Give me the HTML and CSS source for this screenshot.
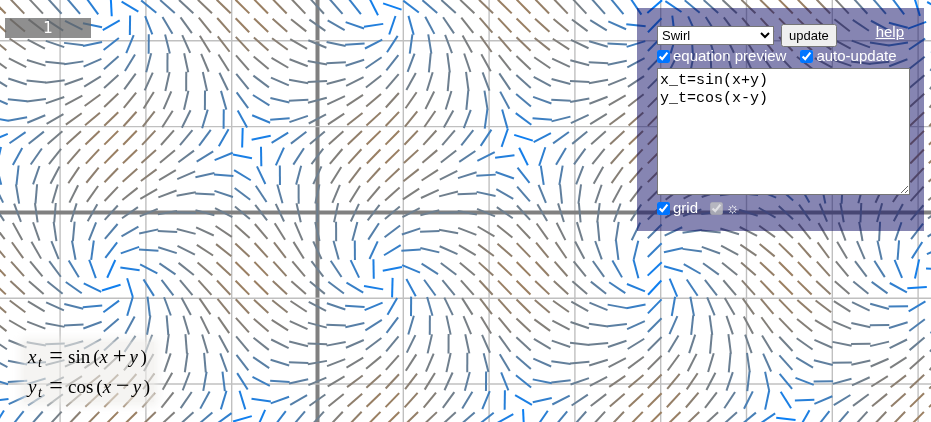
FILE: index.html
```html
<!DOCTYPE html>
<html lang="en">
<head>
<meta charset="utf-8">
<title>Slope field</title>
<link rel="stylesheet" href="styles.css">
</head>
<body>
<canvas id="field" class="field"></canvas>
<output class="counter">1</output>
<section class="preview" aria-label="equation preview">
  <div class="equation"><i>x</i><sub>t</sub><span class="rel">=</span>sin<span class="paren">(</span><i>x</i><span class="op">+</span><i>y</i><span class="paren close">)</span></div>
  <div class="equation"><i>y</i><sub>t</sub><span class="rel">=</span>cos<span class="paren">(</span><i>x</i><span class="op">−</span><i>y</i><span class="paren close">)</span></div>
</section>
<form class="panel">
  <div class="row">
    <select class="preset" aria-label="preset"><option>Swirl</option></select>
    <button class="update" type="button">update</button>
    <a class="help" href="#help">help</a>
  </div>
  <div class="row checks">
    <label class="check"><input type="checkbox" checked>equation preview</label>
    <label class="check"><input type="checkbox" checked>auto-update</label>
  </div>
  <textarea class="source" aria-label="equations" spellcheck="false">x_t=sin(x+y)
y_t=cos(x-y)</textarea>
  <div class="row options">
    <label class="check"><input type="checkbox" checked>grid</label>
    <label class="check light"><input type="checkbox" checked disabled>☼</label>
  </div>
</form>
<script src="field.js"></script>
</body>
</html>
```
FILE: styles.css
```css
* { box-sizing: border-box; }
body {
  margin: 0;
  min-height: 100vh;
  overflow: hidden;
  background: #fff;
  font: 15px/18px "Liberation Sans", Arial, sans-serif;
}
.field {
  position: fixed;
  inset: 0;
  width: 100%;
  height: 100%;
}
.counter {
  position: absolute;
  top: 18px;
  left: 5px;
  width: 86px;
  line-height: 20px;
  text-align: center;
  color: #fff;
  background: rgba(100, 100, 100, 0.72);
  font-family: "DejaVu Sans", sans-serif;
}
.preview {
  position: absolute;
  left: 24px;
  bottom: 20px;
  padding: 0 4px;
  background: rgba(238, 236, 234, 0.6);
  box-shadow: 0 0 8px 4px rgba(238, 236, 234, 0.6);
  font: 19px/30px "Liberation Serif", serif;
  color: #000;
}
.equation {
  display: flex;
  align-items: baseline;
  height: 30px;
}
.equation i {
  width: 10px;
}
.equation sub {
  position: relative;
  top: 4px;
  width: 6px;
  font-size: 14px;
  font-style: italic;
  line-height: 1;
}
.rel, .op {
  width: 14px;
  text-align: center;
  font-size: 24px;
  line-height: 20px;
}
.rel { margin: 0 5px; }
.op { margin: 0 3px; }
.paren { margin-left: 3px; }
.close { margin-left: 1px; }
.panel {
  position: absolute;
  top: 8px;
  right: 7px;
  padding: 16px 14px 14px 20px;
  background: rgba(13, 11, 101, 0.5);
  color: #fff;
}
.row { display: flex; align-items: center; }
.preset {
  width: 117px;
  height: 19px;
  padding: 0;
  font: 13px "Liberation Sans", Arial, sans-serif;
  background: #fff;
  color: #000;
}
.update {
  margin-left: 7px;
  padding: 2px 6px;
  font: 13px "Liberation Sans", Arial, sans-serif;
}
.help {
  align-self: flex-start;
  margin: 0 6px 0 auto;
  line-height: 16px;
  color: #fff;
}
.check { display: flex; align-items: center; }
.check input { width: 13px; height: 13px; margin: 0 3px 0 0; }
.checks { gap: 14px; }
.source {
  display: block;
  width: 253px;
  height: 127px;
  margin: 3px 0 4px;
  padding: 3px 2px;
  border: 1px solid #767676;
  background: #fff;
  color: #000;
  font: 15px/18px "Liberation Mono", monospace;
}
.options { gap: 12px; }
```
FILE: field.js
```js
const canvas = document.getElementById("field");
const ctx = canvas.getContext("2d");
const unit = 85.8;
const origin = { x: 317.5, y: 212.4 };
const step = 18.74;
const half = 9.75;

function line(x1, y1, x2, y2) {
  ctx.beginPath();
  ctx.moveTo(x1, y1);
  ctx.lineTo(x2, y2);
  ctx.stroke();
}

function drawGrid(w, h) {
  for (let i = -4; origin.x + i * unit < w; i++) {
    ctx.strokeStyle = i ? "#c0c0c0" : "#808080";
    ctx.lineWidth = i ? 1.4 : 4;
    line(origin.x + i * unit, 0, origin.x + i * unit, h);
  }
  for (let i = -3; origin.y + i * unit < h; i++) {
    ctx.strokeStyle = i ? "#c0c0c0" : "#808080";
    ctx.lineWidth = i ? 1.4 : 4;
    line(0, origin.y + i * unit, w, origin.y + i * unit);
  }
}

function drawField(w, h) {
  ctx.lineWidth = 2;
  for (let px = -1.2; px < w + step; px += step) {
    for (let py = -12.2; py < h + step; py += step) {
      const x = (px - origin.x) / unit;
      const y = (origin.y - py) / unit;
      const dx = Math.sin(x + y);
      const dy = Math.cos(x - y);
      const m = Math.hypot(dx, dy);
      const ux = half * dx / m;
      const uy = half * dy / m;
      ctx.strokeStyle = `rgb(${Math.round(110 * m)}, 127, ${Math.round(255 - 112 * m)})`;
      line(px - ux, py + uy, px + ux, py - uy);
    }
  }
}

function draw() {
  canvas.width = innerWidth;
  canvas.height = innerHeight;
  drawGrid(canvas.width, canvas.height);
  drawField(canvas.width, canvas.height);
}

addEventListener("resize", draw);
draw();
```
